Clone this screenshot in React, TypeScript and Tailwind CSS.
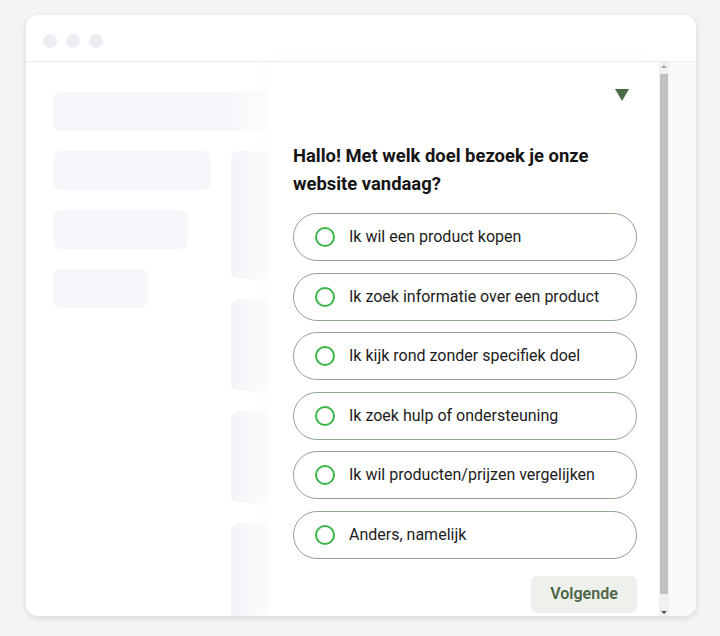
const options = [
  "Ik wil een product kopen",
  "Ik zoek informatie over een product",
  "Ik kijk rond zonder specifiek doel",
  "Ik zoek hulp of ondersteuning",
  "Ik wil producten/prijzen vergelijken",
  "Anders, namelijk",
];

function Skeleton() {
  return (
    <div className="flex flex-col gap-5 pl-[27px] pt-[30px]">
      <div className="h-[39px] w-[600px] rounded-lg bg-[#f6f7fb]" />
      <div className="flex gap-5">
        <div className="flex w-[158px] flex-col gap-5">
          <div className="h-[39px] w-[158px] rounded-lg bg-[#f6f7fb]" />
          <div className="h-[39px] w-[135px] rounded-lg bg-[#f6f7fb]" />
          <div className="h-[39px] w-[95px] rounded-lg bg-[#f6f7fb]" />
        </div>
        <div className="flex w-[200px] flex-col gap-5">
          <div className="h-[128px] rounded-lg bg-[#f3f4f8]" />
          <div className="h-[92px] rounded-lg bg-[#f3f4f8]" />
          <div className="h-[92px] rounded-lg bg-[#f3f4f8]" />
          <div className="h-[100px] rounded-lg bg-[#f3f4f8]" />
        </div>
      </div>
    </div>
  );
}

function Survey() {
  return (
    <div className="absolute bottom-0 left-[243px] right-0 top-[47px] flex">
      <div className="pointer-events-none absolute -left-[40px] top-0 h-full w-[40px] bg-gradient-to-r from-white/0 to-white/80" />
      <div className="flex w-[390px] flex-col rounded-tl-lg bg-white pl-6 pr-[22px] pt-[27px] shadow-[-6px_0_18px_rgba(0,0,0,0.03)]">
        <div className="flex justify-end pr-[8px]">
          <svg width="14" height="12" viewBox="0 0 14 12">
            <path d="M0 0 H14 L7 12 Z" fill="#4b6a47" />
          </svg>
        </div>
        <h2 className="mt-[41px] text-[18.4px] font-bold leading-[28px] text-[#141414]">
          Hallo! Met welk doel bezoek je onze website vandaag?
        </h2>
        <div className="mt-[15px] flex flex-col gap-[11.6px]">
          {options.map((o) => (
            <div
              key={o}
              className="flex h-12 items-center gap-[14px] rounded-full border border-[#8fa58c] pl-[21px]"
            >
              <span className="h-5 w-5 rounded-full border-2 border-[#3cb548]" />
              <span className="text-[16px] text-[#1c1c1c]">{o}</span>
            </div>
          ))}
        </div>
        <div className="mt-[17px] flex justify-end">
          <button className="h-[37px] w-[106px] rounded-md bg-[#eef0ec] text-[16px] font-semibold text-[#4d6649]">
            Volgende
          </button>
        </div>
      </div>
      <div className="flex w-[10px] flex-col items-center bg-[#f1f1f1]">
        <div className="mt-[3px] h-0 w-0 border-x-[3px] border-b-[3px] border-x-transparent border-b-[#a3a3a3]" />
        <div className="mt-[6px] h-[520px] w-[8px] bg-[#c1c1c1]" />
        <div className="mt-[17px] h-0 w-0 border-x-[3px] border-t-[3px] border-x-transparent border-t-[#505050]" />
      </div>
      <div className="flex-1 bg-[#fafafa]" />
    </div>
  );
}

export default function App() {
  return (
    <div className="h-[636px] w-[720px] bg-[#f3f4f6] pl-[26px] pt-[15px] font-['Roboto',sans-serif]">
      <div className="relative h-[601px] w-[670px] overflow-hidden rounded-xl bg-white shadow-[0_2px_6px_rgba(0,0,0,0.12)]">
        <div className="flex h-[47px] items-start gap-[9px] border-b border-[#eeeff2] pl-[17px] pt-[19px]">
          <span className="h-[14px] w-[14px] rounded-full bg-[#eceef3]" />
          <span className="h-[14px] w-[14px] rounded-full bg-[#eceef3]" />
          <span className="h-[14px] w-[14px] rounded-full bg-[#eceef3]" />
        </div>
        <Skeleton />
        <Survey />
      </div>
    </div>
  );
}
